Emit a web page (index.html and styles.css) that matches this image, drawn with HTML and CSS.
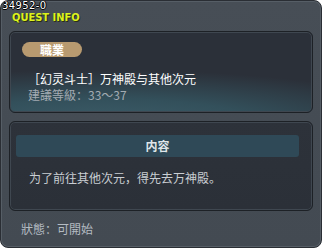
FILE: index.html
```html
<!DOCTYPE html>
<html lang="zh">
  <head>
    <meta charset="UTF-8" />
    <title>QUEST INFO</title>
    <link rel="stylesheet" href="styles.css">
  </head>
  <body>
    <section class="window">
      <div class="head">
        <div class="qid">34952-0</div>
        <div class="title">QUEST INFO</div>
      </div>

      <!-- 职业 / 任务名 -->
      <div class="panel p1">
        <div class="badge">職業</div>
        <div class="name">［幻灵斗士］万神殿与其他次元</div>
        <div class="level">建議等級：33～37</div>
      </div>

      <!-- 内容 -->
      <div class="panel p2">
        <div class="bar">内容</div>
        <div class="desc">为了前往其他次元，得先去万神殿。</div>
      </div>

      <div class="state">狀態：可開始</div>
    </section>
  </body>
</html>
```

FILE: styles.css
```css
body {
  margin: 0;
  background: #fff;
  font-family: "Noto Sans CJK SC", "Noto Sans CJK TC", sans-serif;
}
.window {
  box-sizing: border-box;
  width: 322px;
  height: 248px;
  background: linear-gradient(#474e56, #434a52);
  border: 1px solid #2a2e34;
  border-radius: 8px;
  box-shadow: inset 0 0 0 1px #565e66;
  overflow: hidden;
}
.head {
  height: 30px;
}
.qid {
  font-family: "DejaVu Sans", sans-serif;
  font-size: 10px;
  line-height: 10px;
  height: 10px;
  padding-left: 1px;
  letter-spacing: 0.4px;
  color: #fff;
  text-shadow: 1px 0 #000, -1px 0 #000, 0 1px #000, 0 -1px #000;
}
.title {
  font-family: "DejaVu Sans Condensed", "DejaVu Sans", sans-serif;
  font-stretch: condensed;
  font-weight: bold;
  font-size: 11px;
  line-height: 11px;
  color: #dcf21e;
  margin-left: 11px;
  margin-top: 1px;
  text-shadow: 1px 1px #2a2f10;
}
.panel {
  box-sizing: border-box;
  width: 304px;
  margin-left: 8px;
  border: 1px solid #1d2126;
  border-radius: 6px;
  box-shadow: inset 0 0 0 1px #3f4750;
}

/* 职业 */
.p1 {
  height: 82px;
  padding: 10px 0 0 12px;
  background: radial-gradient(ellipse 130% 80% at 30% 115%, #3d5d69 0%, #33505b 40%, rgba(43, 49, 58, 0) 85%), #2b3039;
}
.badge {
  width: 60px;
  height: 15px;
  line-height: 15px;
  border-radius: 8px;
  background: #b89a70;
  color: #fff;
  font-size: 12px;
  font-weight: bold;
  text-align: center;
}
.name {
  margin: 14px 0 0 6px;
  font-size: 12px;
  line-height: 15px;
  color: #fff;
}
.level {
  margin: 1px 0 0 6px;
  font-size: 12px;
  line-height: 15px;
  color: #a3abb2;
}

/* 内容 */
.p2 {
  height: 90px;
  margin-top: 8px;
  padding: 13px 0 0 6px;
  background: linear-gradient(#2d323a, #2b3038);
}
.bar {
  width: 283px;
  height: 22px;
  line-height: 22px;
  border-radius: 3px;
  background: #2f4957;
  color: #dfe6ea;
  font-size: 12px;
  font-weight: bold;
  text-align: center;
}
.desc {
  margin: 13px 0 0 13px;
  font-size: 12px;
  line-height: 16px;
  color: #c9ced3;
}
.state {
  margin: 10px 0 0 20px;
  font-size: 12px;
  line-height: 16px;
  color: #b4bbc2;
}
```
